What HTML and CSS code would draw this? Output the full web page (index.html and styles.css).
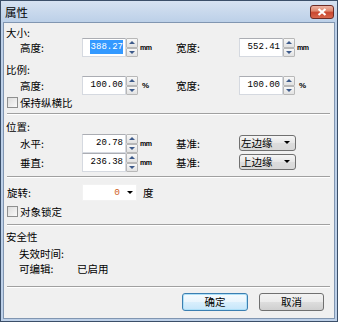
FILE: index.html
```html
<!DOCTYPE html>
<html lang="zh">
<head>
<meta charset="utf-8">
<link rel="stylesheet" href="styles.css">
</head>
<body>
<div class="window">
  <div class="titlebar">
    <span class="title">属性</span>
    <div class="close"><svg width="10" height="8" viewBox="0 0 10 8"><path d="M1.5 1 L8.5 7 M8.5 1 L1.5 7" stroke="#fff" stroke-width="2.2"/></svg></div>
  </div>
  <div class="frame">
    <div class="content">
      <div class="heading h-size">大小:</div>
      <div class="row">
        <span class="lab">高度:</span>
        <div class="spin"><div class="input"><span class="sel">388.27</span></div><div class="btns"><span class="btn"><i class="up"></i></span><span class="btn"><i class="down"></i></span></div></div>
        <span class="unit">mm</span>
        <span class="lab lab2">宽度:</span>
        <div class="spin"><div class="input">552.41</div><div class="btns"><span class="btn"><i class="up"></i></span><span class="btn"><i class="down"></i></span></div></div>
        <span class="unit">mm</span>
      </div>
      <div class="heading h-ratio">比例:</div>
      <div class="row">
        <span class="lab">高度:</span>
        <div class="spin"><div class="input">100.00</div><div class="btns"><span class="btn"><i class="up"></i></span><span class="btn"><i class="down"></i></span></div></div>
        <span class="unit pct">%</span>
        <span class="lab lab2">宽度:</span>
        <div class="spin"><div class="input">100.00</div><div class="btns"><span class="btn"><i class="up"></i></span><span class="btn"><i class="down"></i></span></div></div>
        <span class="unit pct">%</span>
      </div>
      <div class="checkrow c-keep"><span class="box"></span>保持纵横比</div>
      <div class="sep"></div>
      <div class="heading h-pos">位置:</div>
      <div class="row">
        <span class="lab">水平:</span>
        <div class="spin"><div class="input">20.78</div><div class="btns"><span class="btn"><i class="up"></i></span><span class="btn"><i class="down"></i></span></div></div>
        <span class="unit">mm</span>
        <span class="lab lab2">基准:</span>
        <div class="select">左边缘<i class="arrow"></i></div>
      </div>
      <div class="row">
        <span class="lab">垂直:</span>
        <div class="spin"><div class="input">236.38</div><div class="btns"><span class="btn"><i class="up"></i></span><span class="btn"><i class="down"></i></span></div></div>
        <span class="unit">mm</span>
        <span class="lab lab2">基准:</span>
        <div class="select">上边缘<i class="arrow"></i></div>
      </div>
      <div class="sep"></div>
      <div class="rotrow">
        <span class="rlab">旋转:</span>
        <div class="combo"><span class="zero">0</span><i class="arrow"></i></div>
        <span class="deg">度</span>
      </div>
      <div class="checkrow c-lock"><span class="box"></span>对象锁定</div>
      <div class="sep s3"></div>
      <div class="heading h-sec">安全性</div>
      <div class="info i1"><span class="ilab">失效时间:</span></div>
      <div class="info i2"><span class="ilab">可编辑:</span><span>已启用</span></div>
      <div class="sep s4"></div>
      <div class="buttons">
        <button class="button default">确定</button>
        <button class="button">取消</button>
      </div>
    </div>
  </div>
</div>
</body>
</html>
```

FILE: styles.css
```css
body {
  margin: 0;
  width: 338px;
  height: 322px;
  overflow: hidden;
  font-family: "Noto Sans CJK SC", "Noto Sans", sans-serif;
  font-size: 10.5px;
  color: #000;
}
.window {
  width: 338px;
  height: 322px;
  box-sizing: border-box;
  border: 1px solid #3b4f69;
  background: #bdd0e8;
  display: flex;
  flex-direction: column;
}
.titlebar {
  height: 21px;
  flex: none;
  display: flex;
  align-items: center;
  justify-content: space-between;
  padding: 0 3px 0 4px;
  background: linear-gradient(#d6e2f1, #bcd0e8);
}
.title {
  font-size: 11.5px;
  line-height: 14px;
}
.close {
  width: 24px;
  height: 14px;
  box-sizing: border-box;
  border: 1px solid #6d2b24;
  border-radius: 3px;
  background: linear-gradient(#eeb4a4 0%, #e08a70 40%, #c9472f 55%, #d8664c 100%);
  display: flex;
  align-items: center;
  justify-content: center;
}
.frame {
  flex: 1;
  padding: 0 2px 2px;
  display: flex;
}
.content {
  flex: 1;
  border: 1px solid #8196b1;
  background: #f0f0f0;
  display: flex;
  flex-direction: column;
}
.heading {
  padding-left: 2px;
  flex: none;
}
.h-size { height: 15px; line-height: 20px; }
.h-ratio { height: 19px; line-height: 26px; }
.h-pos { height: 19px; line-height: 24px; }
.h-sec { height: 19px; line-height: 22px; }

.row {
  display: flex;
  align-items: center;
  height: 19px;
  padding-left: 16px;
  flex: none;
}
.lab { width: 62px; flex: none; }
.lab2 { width: 63px; }
.spin {
  display: flex;
  height: 19px;
  flex: none;
}
.input {
  width: 44px;
  box-sizing: border-box;
  height: 19px;
  background: #fff;
  border: 1px solid #d5d9e0;
  border-top-color: #abadb3;
  font-family: "Liberation Mono", monospace;
  font-size: 9px;
  line-height: 17px;
  text-align: right;
  padding-right: 2px;
}
.sel {
  background: #3399ff;
  color: #fff;
  padding: 2px 0 2px 1px;
}
.btns {
  width: 12px;
  display: flex;
  flex-direction: column;
}
.btn {
  flex: 1;
  box-sizing: border-box;
  border: 1px solid #b8b8b8;
  border-radius: 1px;
  background: linear-gradient(#f8f8f8, #e2e2e2);
  display: flex;
  align-items: center;
  justify-content: center;
}
.up {
  width: 0; height: 0;
  border-left: 3px solid transparent;
  border-right: 3px solid transparent;
  border-bottom: 3px solid #3d5a8a;
}
.down {
  width: 0; height: 0;
  border-left: 3px solid transparent;
  border-right: 3px solid transparent;
  border-top: 3px solid #3d5a8a;
}
.unit {
  width: 38px;
  box-sizing: border-box;
  padding-left: 2px;
  font-family: "Liberation Sans", sans-serif;
  font-size: 7px;
  font-weight: bold;
  letter-spacing: -0.5px;
  flex: none;
}
.pct { font-size: 8px; padding-left: 4px; }

.select {
  width: 57px;
  height: 16px;
  box-sizing: border-box;
  border: 1px solid #707070;
  border-radius: 3px;
  background: linear-gradient(#f6f6f6, #e6e6e6 50%, #dcdcdc 51%, #d8d8d8);
  display: flex;
  align-items: center;
  justify-content: space-between;
  padding: 0 5px 0 1px;
  line-height: 14px;
  margin-top: -2px;
}
.arrow {
  width: 0; height: 0;
  border-left: 3.5px solid transparent;
  border-right: 3.5px solid transparent;
  border-top: 3.5px solid #000;
}

.checkrow {
  display: flex;
  align-items: center;
  padding-left: 3px;
  flex: none;
}
.c-keep { height: 14px; }
.c-lock { height: 20px; }
.box {
  width: 11px;
  height: 11px;
  box-sizing: border-box;
  border: 1px solid #8e8f8f;
  background: linear-gradient(135deg, #dcdcdc, #fafafa);
  margin-right: 2px;
  flex: none;
}

.sep {
  margin: 4px 4px 0 3px;
  height: 0;
  border-top: 1px solid #a0a0a0;
  border-bottom: 1px solid #fff;
  flex: none;
}
.s3 { margin-top: 3px; }
.s4 { margin-top: 10px; }

.rotrow {
  display: flex;
  align-items: center;
  height: 17px;
  margin-top: 6px;
  padding-left: 3px;
  flex: none;
}
.rlab { width: 75px; flex: none; }
.combo {
  width: 55px;
  height: 17px;
  box-sizing: border-box;
  background: #fff;
  border: 1px solid #f2f2f2;
  display: flex;
  align-items: center;
  justify-content: flex-end;
  padding-right: 3px;
}
.zero {
  font-family: "Liberation Mono", monospace;
  font-size: 9.5px;
  color: #d0611c;
  margin-right: 7px;
}
.deg { margin-left: 6px; }

.info {
  display: flex;
  align-items: center;
  padding-left: 15px;
  flex: none;
}
.i1 { height: 16px; }
.i2 { height: 15px; }
.ilab { width: 58px; flex: none; }

.buttons {
  display: flex;
  justify-content: flex-end;
  gap: 11px;
  margin-top: 5px;
  padding-right: 10px;
  flex: none;
}
.button {
  width: 65px;
  height: 18px;
  box-sizing: border-box;
  border: 1px solid #707070;
  border-radius: 3px;
  background: linear-gradient(#f2f2f2, #ebebeb 50%, #dddddd 51%, #cfcfcf);
  font-family: "Noto Sans CJK SC", sans-serif;
  font-size: 10.5px;
  line-height: 14px;
  padding: 0;
  color: #000;
}
.default {
  width: 66px;
  border-color: #3c7fb1;
  box-shadow: inset 0 0 0 1px #aee0f8;
  background: linear-gradient(#f6fbfe, #e9f5fd 50%, #d9effc 51%, #c6e6fa);
}
```
